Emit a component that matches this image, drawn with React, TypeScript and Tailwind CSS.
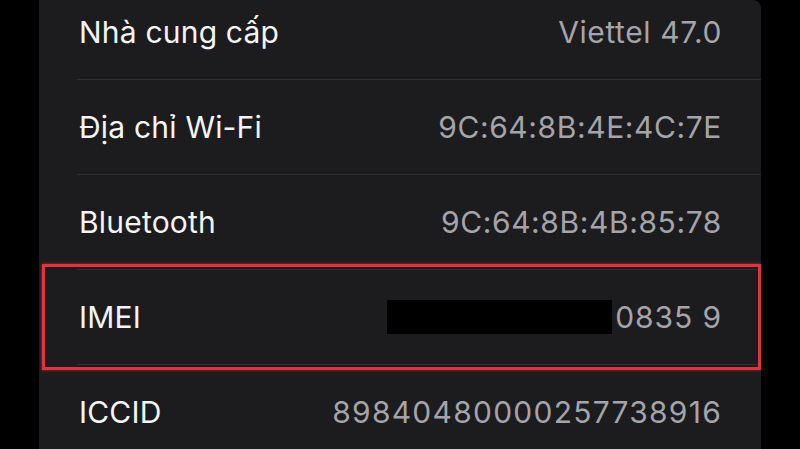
import React from "react";

const rows: { label: string; value: string; redacted?: boolean; track: string }[] = [
  { label: "Nhà cung cấp", value: "Viettel 47.0", track: "tracking-[0.6px]" },
  { label: "Địa chỉ Wi-Fi", value: "9C:64:8B:4E:4C:7E", track: "tracking-[0.6px]" },
  { label: "Bluetooth", value: "9C:64:8B:4B:85:78", track: "tracking-[0.6px]" },
  { label: "IMEI", value: "0835 9", redacted: true, track: "tracking-[0.9px]" },
  { label: "ICCID", value: "89840480000257738916", track: "tracking-[1.25px]" },
];

export default function App() {
  return (
    <div
      className="w-[800px] h-[449px] bg-black flex overflow-hidden"
      style={{ fontFamily: "Inter, 'Noto Sans', sans-serif" }}
    >
      <div className="ml-[39px] w-[722px] h-[449px] bg-[#1c1c1e] rounded-tr-[8px] overflow-hidden">
        <div className="-mt-[15px] flex flex-col">
          {rows.map((r, i) => (
            <div key={r.label} className="relative pl-[38px] h-[95px]">
              <div
                className={`h-full flex items-center justify-between pl-[2px] pr-[40px] ${
                  i < rows.length - 1 ? "border-b border-[#2f2f31]" : ""
                }`}
              >
                <span className="text-[30px] text-[#f4f4f6] tracking-[0.2px]">{r.label}</span>
                <div className="flex items-center gap-[3px]">
                  {r.redacted && <div className="w-[225px] h-[34px] bg-black" />}
                  <span className={`text-[30px] text-[#a4a4aa] ${r.track} -mr-[1px]`}>{r.value}</span>
                </div>
              </div>
              {r.redacted && (
                <div className="absolute -top-[6px] -bottom-[5px] left-[3px] right-0 border-[3px] border-[#e0333f] shadow-[0_0_3px_rgba(224,51,63,0.7)]" />
              )}
            </div>
          ))}
        </div>
      </div>
    </div>
  );
}
